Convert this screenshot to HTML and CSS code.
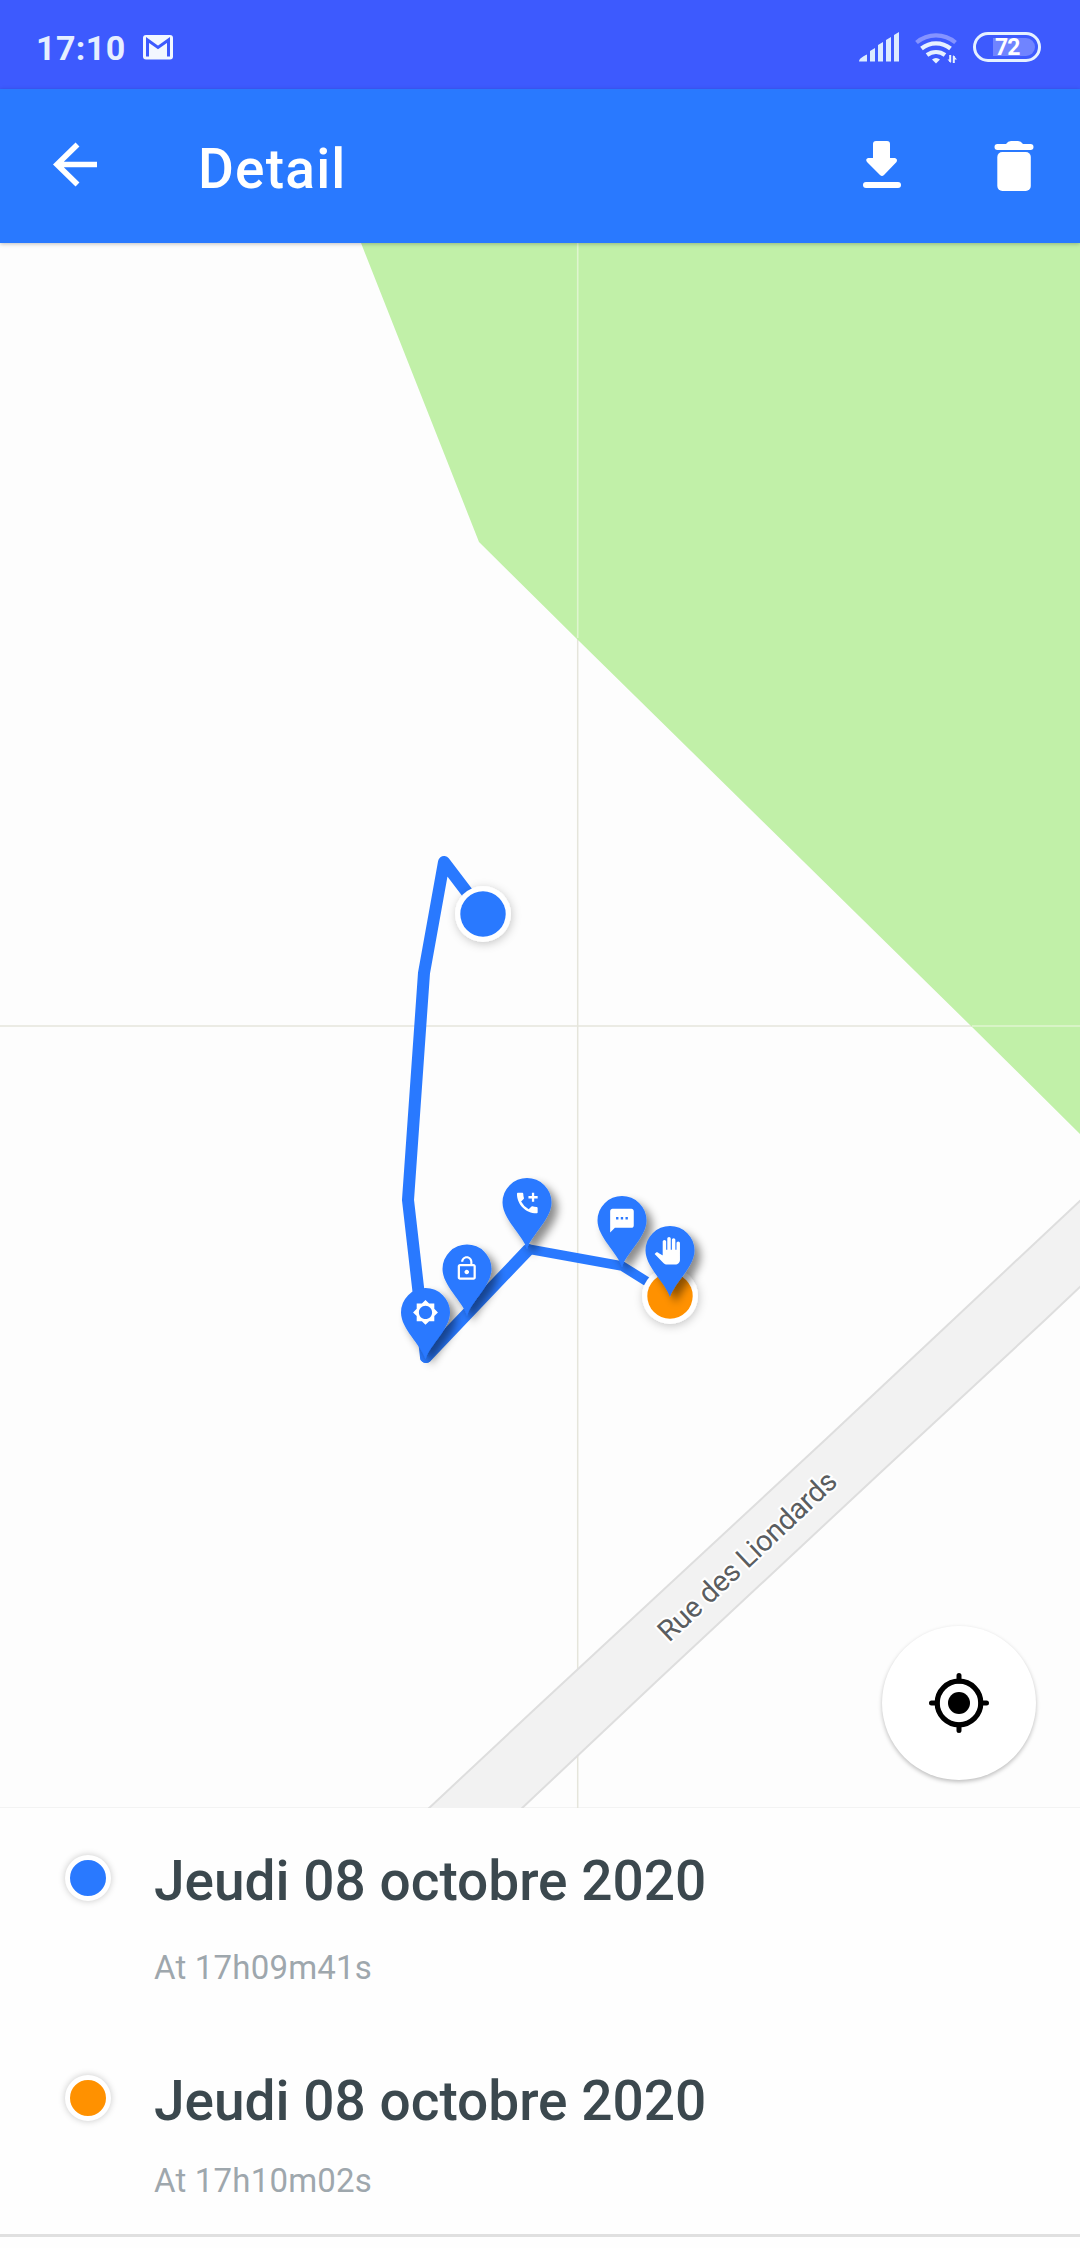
FILE: index.html
```html
<!DOCTYPE html>
<html lang="fr">
<head>
<meta charset="utf-8">
<title>Detail</title>
<link rel="stylesheet" href="styles.css">
</head>
<body>
<div class="status-bar">
  <span class="clock">17:10</span>
  <svg class="mail-icon" width="30" height="25" viewBox="0 0 30 25">
    <rect width="30" height="24.500" rx="3" fill="#f2f7ff"/>
    <path d="M4.500 21.500V5L15 12.500L25.500 5V21.500" fill="none" stroke="#3d5afe" stroke-width="3"/>
  </svg>
  <svg class="signal-icon" width="42" height="30" viewBox="0 0 42 30" fill="#dcebff">
    <path d="M0 29.500c0-3 5-5.500 8-7v7zM11 19l5-3v13.500h-5zM19 13l5-3v19.500h-5zM27 8l5-3v24.500h-5zM35 3l5-3v29.500h-5z"/>
  </svg>
  <svg class="wifi-icon" width="44" height="34" viewBox="0 0 44 34" fill="none" stroke="#e6f1ff" stroke-width="4.200">
    <path d="M1.500 11.500a30 30 0 0 1 39 0" stroke="#8593ff"/>
    <path d="M6.500 17.500a23 23 0 0 1 29 0"/>
    <path d="M12 24a15 15 0 0 1 18 0"/>
    <path d="M17 28.500a6 6 0 0 1 8 0l-4 4z" fill="#e6f1ff" stroke="none"/>
    <path d="M35.200 24v7M38.800 32v-7" stroke-width="2"/>
    <path d="M32.500 28.500h3.500v3.500zM38 28.500h4l-4-4.500z" fill="#e6f1ff" stroke="none"/>
  </svg>
  <span class="battery"><span class="battery-level">72</span></span>
</div>

<header class="app-bar">
  <svg class="back-icon" width="46" height="46" viewBox="0 0 46 46" fill="none" stroke="#fff" stroke-width="5.600">
    <path d="M45 22.500H5M25.500 2.500L5 22.500L25.500 42.500"/>
  </svg>
  <h1 class="title">Detail</h1>
  <svg class="download-icon" width="40" height="50" viewBox="0 0 40 50" fill="#fff">
    <path d="M14 0h11q3 0 3 3v14h5q3 1 1.500 4L22 34q-2 2-4 0L5 21q-2-3 1-4h5V3q0-3 3-3z"/>
    <rect x="1" y="41" width="38" height="6" rx="3"/>
  </svg>
  <svg class="trash-icon" width="40" height="50" viewBox="0 0 40 50" fill="#fff">
    <path d="M12 3q2-3 5-3h7q3 0 5 3h7.500a3 3 0 0 1 0 6h-33a3 3 0 0 1 0-6z"/>
    <rect x="3.300" y="11" width="33.500" height="39" rx="5"/>
  </svg>
</header>

<main class="map">
  <svg class="map-canvas" viewBox="0 243 1080 1565">
    <defs>
      <filter id="pin-shadow" x="-40%" y="-30%" width="200%" height="170%">
        <feDropShadow dx="6" dy="6" stdDeviation="4" flood-color="#000" flood-opacity=".45"/>
      </filter>
      <filter id="dot-shadow" x="-40%" y="-40%" width="180%" height="180%">
        <feDropShadow dx="1" dy="2" stdDeviation="5" flood-color="#000" flood-opacity=".22"/>
      </filter>
      <path id="pin" d="M0 46C-5 31-24.500 16-24.500-.5a24.500 24.500 0 0 1 49 0C24.500 16 5 31 0 46z" fill="#2979ff"/>
    </defs>
    <path d="M577.700 638V1808M0 1026H972" stroke="#e5e5db" stroke-width="1.500"/>
    <path d="M361 243L479 542L579 641L970 1025L1080 1134V243z" fill="#c1f0a8"/>
    <path d="M577.700 243V638M972 1026H1080" stroke="#dff5cf" stroke-width="1.600"/>
    <path d="M1084 1197L953 1320L825 1440L536 1708L427 1810H520L658 1680L880 1473L1045 1320L1084 1283z" fill="#f2f2f2" stroke="#dedede" stroke-width="2"/>
    <text class="street" transform="translate(669 1643) rotate(-43.200)" textLength="233">Rue des Liondards</text>

    <path d="M482 912L444 862L424 973L408 1200L426 1357" class="track"/>
    <path d="M426 1357L528 1250" class="track"/>
    <path d="M528 1249L622 1266L670 1296" class="track track-end"/>

    <g filter="url(#dot-shadow)">
      <circle cx="483" cy="914" r="28" fill="#fff"/>
      <circle cx="670" cy="1296" r="28" fill="#fff"/>
    </g>
    <circle cx="483" cy="914" r="22.700" fill="#2979ff"/>
    <circle cx="670" cy="1296" r="22.700" fill="#ff9100"/>

    <g transform="translate(527 1203)" fill="#fff">
      <use href="#pin" filter="url(#pin-shadow)"/>
      <path transform="translate(-13.500 -13.800) scale(1.150)" d="M20 15.500c-1.250 0-2.450-.2-3.570-.57a1 1 0 0 0-1.020.24l-2.200 2.200a15.050 15.050 0 0 1-6.590-6.580l2.200-2.210a.96.96 0 0 0 .25-1A11.360 11.360 0 0 1 8.500 4c0-.55-.45-1-1-1H4c-.55 0-1 .45-1 1 0 9.390 7.610 17 17 17 .55 0 1-.45 1-1v-3.500c0-.55-.45-1-1-1zM21 6h-3V3h-2v3h-3v2h3v3h2V8h3z"/>
    </g>
    <g transform="translate(467 1269.500)" fill="#fff">
      <use href="#pin" filter="url(#pin-shadow)"/>
      <path transform="translate(-13.800 -14.500) scale(1.130)" d="M12 17c1.100 0 2-.9 2-2s-.9-2-2-2-2 .9-2 2 .9 2 2 2zm6-9h-1V6c0-2.760-2.240-5-5-5S7 3.240 7 6h1.900c0-1.710 1.390-3.100 3.100-3.100s3.100 1.390 3.100 3.100v2H6c-1.100 0-2 .9-2 2v10c0 1.100.9 2 2 2h12c1.100 0 2-.9 2-2V10c0-1.100-.9-2-2-2zm0 12H6V10h12v10z"/>
    </g>
    <g transform="translate(425.500 1313)" fill="#fff">
      <use href="#pin" filter="url(#pin-shadow)"/>
      <path transform="translate(-13.200 -13.800) scale(1.100)" d="M20 15.310L23.310 12 20 8.690V4h-4.690L12 .69 8.690 4H4v4.690L.69 12 4 15.310V20h4.690L12 23.310 15.310 20H20v-4.690zM12 18c-3.310 0-6-2.690-6-6s2.690-6 6-6 6 2.690 6 6-2.690 6-6 6z"/>
    </g>
    <g transform="translate(622 1221)" fill="#fff">
      <use href="#pin" filter="url(#pin-shadow)"/>
      <path transform="translate(-14.200 -14.500) scale(1.180)" d="M20 2H4c-1.100 0-1.990.9-1.990 2L2 22l4-4h14c1.100 0 2-.9 2-2V4c0-1.100-.9-2-2-2zM9 11H7V9h2v2zm4 0h-2V9h2v2zm4 0h-2V9h2v2z"/>
    </g>
    <g transform="translate(670 1251)" fill="#fff">
      <use href="#pin" filter="url(#pin-shadow)"/>
      <path transform="translate(-16.500 -14) scale(1.150)" d="M23 5.500V20c0 2.200-1.800 4-4 4h-7.300c-1.080 0-2.100-.43-2.850-1.190L1 14.830s1.260-1.230 1.300-1.250c.22-.19.490-.29.790-.29.220 0 .42.060.6.160.04.010 4.310 2.460 4.310 2.460V4c0-.83.670-1.500 1.500-1.500S11 3.170 11 4v7h1V1.500c0-.83.670-1.500 1.500-1.500S15 .67 15 1.500V11h1V2.500c0-.83.670-1.500 1.500-1.500s1.500.67 1.500 1.500V11h1V5.500c0-.83.670-1.500 1.500-1.500s1.500.67 1.500 1.500z"/>
    </g>
  </svg>
  <button class="locate" aria-label="Locate">
    <svg width="62" height="62" viewBox="0 0 62 62" fill="none" stroke="#000">
      <circle cx="31" cy="31" r="21.800" stroke-width="5.200"/>
      <circle cx="31" cy="31" r="11" fill="#000" stroke="none"/>
      <path d="M31 3.500V9M31 53v5.500M3.500 31H9M53 31h5.500" stroke-width="5" stroke-linecap="round"/>
    </svg>
  </button>
</main>

<section class="events">
  <article class="event">
    <span class="dot dot-start"></span>
    <div>
      <h2 class="date">Jeudi 08 octobre 2020</h2>
      <p class="time">At 17h09m41s</p>
    </div>
  </article>
  <article class="event event-last">
    <span class="dot dot-end"></span>
    <div>
      <h2 class="date">Jeudi 08 octobre 2020</h2>
      <p class="time">At 17h10m02s</p>
    </div>
  </article>
</section>
</body>
</html>
```
FILE: styles.css
```css
* { box-sizing: border-box; }

body {
  margin: 0;
  width: 1080px;
  height: 2248px;
  display: flex;
  flex-direction: column;
  overflow: hidden;
  background: #fefefe;
  font-family: Roboto, "Liberation Sans", sans-serif;
}

h1, h2, p { margin: 0; }
svg { display: block; flex: none; }

.status-bar {
  flex: none;
  height: 89px;
  display: flex;
  align-items: flex-start;
  padding: 32px 39px 0 36px;
  background: #3d5afe;
  color: #e6efff;
}
.clock {
  width: 107px;
  margin-top: -1px;
  font-size: 34px;
  line-height: 34px;
  font-weight: 700;
  letter-spacing: .4px;
}
.mail-icon { margin-top: 3px; }
.signal-icon { margin-left: auto; }
.wifi-icon { margin: -1px 14px 0 14px; }
.battery {
  width: 68px;
  height: 30px;
  border: 3px solid #e6f1ff;
  border-radius: 15px;
  padding: 3px;
}
.battery-level {
  display: block;
  height: 18px;
  margin-left: 14px;
  padding-left: 2px;
  border-radius: 0 9px 9px 0;
  background: #7084ff;
  color: #fff;
  font-size: 23px;
  line-height: 19px;
  font-weight: 700;
  letter-spacing: -1px;
}

.app-bar {
  flex: none;
  height: 154px;
  display: flex;
  align-items: flex-start;
  padding: 52px 46px 0 52px;
  background: #2979ff;
  color: #fff;
  position: relative;
  z-index: 1;
  box-shadow: 0 1px 4px rgba(0, 0, 0, .25);
}
.back-icon { margin-top: 1px; }
.title {
  margin: 1px auto 0 100px;
  font-size: 55px;
  line-height: 55px;
  font-weight: 500;
  letter-spacing: 1.2px;
}
.trash-icon { margin-left: 92px; }

.map {
  flex: none;
  height: 1565px;
  position: relative;
  background: #fdfdfd;
  border-bottom: 1px solid #f3f3f3;
}
.map-canvas { width: 1080px; height: 1565px; }
.track {
  fill: none;
  stroke: #2979ff;
  stroke-width: 12px;
  stroke-linecap: round;
  stroke-linejoin: round;
}
.track-end { stroke-width: 9.500px; }
.street {
  font-size: 29px;
  fill: #5a5d60;
  stroke: #fff;
  stroke-width: 4px;
  paint-order: stroke;
}
.locate {
  position: absolute;
  right: 44px;
  bottom: 27px;
  width: 154px;
  height: 154px;
  display: grid;
  place-items: center;
  padding: 0;
  border: 0;
  border-radius: 50%;
  background: #fff;
  box-shadow: 0 2px 4px rgba(0, 0, 0, .25);
}

.events {
  flex: none;
  height: 429px;
  border-bottom: 3px solid #e0e0e0;
  background: #fefefe;
}
.event {
  height: 220px;
  display: flex;
  padding: 45px 0 0 65px;
}
.dot {
  flex: none;
  width: 46px;
  height: 46px;
  margin: 2px 43px 0 0;
  border: 5px solid #fff;
  border-radius: 50%;
  box-shadow: 0 0 7px rgba(0, 0, 0, .22);
}
.dot-start { background: #2979ff; }
.dot-end { background: #ff9100; }
.date {
  font-size: 55px;
  line-height: 56px;
  font-weight: 500;
  color: #3b484e;
}
.time {
  margin-top: 39px;
  font-size: 33px;
  line-height: 40px;
  letter-spacing: .2px;
  color: #9ea7ad;
}
.event-last .time { margin-top: 32px; }
```
